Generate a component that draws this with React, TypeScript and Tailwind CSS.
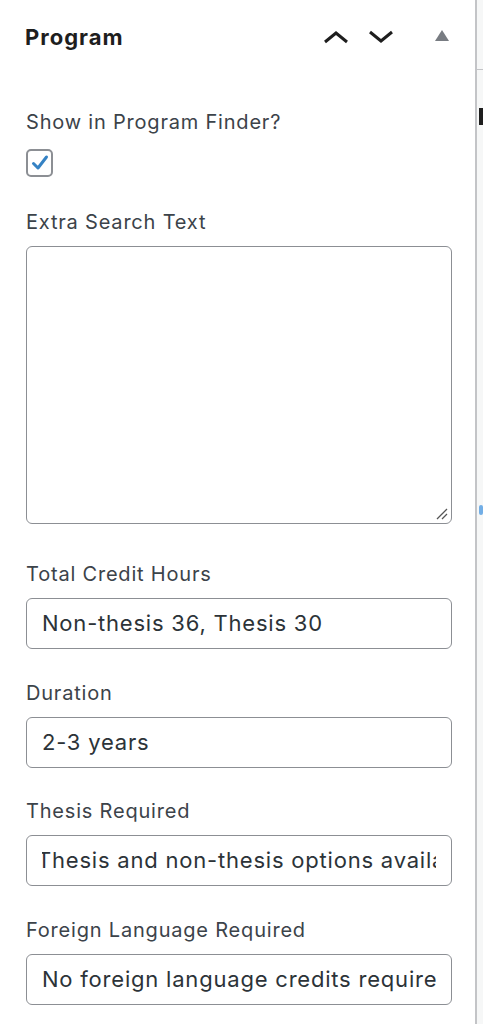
const Label = ({ children, className = '' }: { children: React.ReactNode; className?: string }) => (
    <label className={`block text-[20px] leading-[26px] tracking-[0.04em] text-[#3c434a] ${className}`}>
        {children}
    </label>
)

const TextBox = ({ value, shift = 0 }: { value: string; shift?: number }) => (
    <div className="mt-[11px] h-[51px] w-[426px] rounded-[6px] border border-[#8c8f94] bg-white px-[15px] flex items-center">
        <div className="overflow-hidden whitespace-nowrap w-full text-[22px] tracking-[0.036em] text-[#2c3338]">
            <span style={{ marginLeft: -shift }}>{value}</span>
        </div>
    </div>
)

export default function App() {
    return (
        <div className="flex h-[1024px] w-[483px] bg-[#f6f7f7] font-['Inter',sans-serif]">
            <div className="w-[477px] shrink-0 bg-white border-r-2 border-[#c3c4c7] pl-[26px]">
                {/* header */}
                <div className="flex items-center h-[74px] pr-[26px]">
                    <h2 className="flex-1 text-[22px] font-bold tracking-[0.045em] text-[#1e1e1e] -ml-[1px]">Program</h2>
                    <svg width="26" height="14" viewBox="0 0 26 14" className="mr-[19px]">
                        <path d="M2 12 L13 3 L24 12" fill="none" stroke="#1e1e1e" strokeWidth="3" />
                    </svg>
                    <svg width="26" height="14" viewBox="0 0 26 14" className="mr-[41px]">
                        <path d="M2 2 L13 11 L24 2" fill="none" stroke="#1e1e1e" strokeWidth="3" />
                    </svg>
                    <svg width="14" height="11" viewBox="0 0 14 11" className="mb-[4px]">
                        <path d="M7 0 L14 11 L0 11 Z" fill="#787c82" />
                    </svg>
                </div>

                <Label className="mt-[35px]">Show in Program Finder?</Label>
                <div className="mt-[14px] w-[27px] h-[28px] rounded-[5px] border-2 border-[#8c8f94] flex items-center justify-center">
                    <svg width="20" height="20" viewBox="0 0 20 20">
                        <path d="M3.5 10.5 L8 15 L16.5 4" fill="none" stroke="#3582c4" strokeWidth="3" strokeLinecap="round" strokeLinejoin="round" />
                    </svg>
                </div>

                <Label className="mt-[32px]">Extra Search Text</Label>
                <div className="relative mt-[11px] h-[278px] w-[426px] rounded-[6px] border border-[#8c8f94] bg-white">
                    <svg width="12" height="12" viewBox="0 0 12 12" className="absolute right-[3px] bottom-[3px]">
                        <path d="M1 11 L11 1 M6 11 L11 6" stroke="#555" strokeWidth="1.3" />
                    </svg>
                </div>

                <Label className="mt-[37px]">Total Credit Hours</Label>
                <TextBox value="Non-thesis 36, Thesis 30" />

                <Label className="mt-[31px]">Duration</Label>
                <TextBox value="2-3 years" />

                <Label className="mt-[30px]">Thesis Required</Label>
                <TextBox value="Thesis and non-thesis options available" shift={5} />

                <Label className="mt-[31px]">Foreign Language Required</Label>
                <TextBox value="No foreign language credits required" />
            </div>
            <div className="flex-1 relative">
                <div className="absolute left-0 top-[69px] h-[1px] w-full bg-[#c3c4c7]" />
                <div className="absolute left-[2px] top-[108px] h-[17px] w-[4px] bg-[#1e1e1e]" />
                <div className="absolute left-[2px] top-[505px] h-[10px] w-[4px] rounded-full bg-[#72aee6]" />
            </div>
        </div>
    )
}
